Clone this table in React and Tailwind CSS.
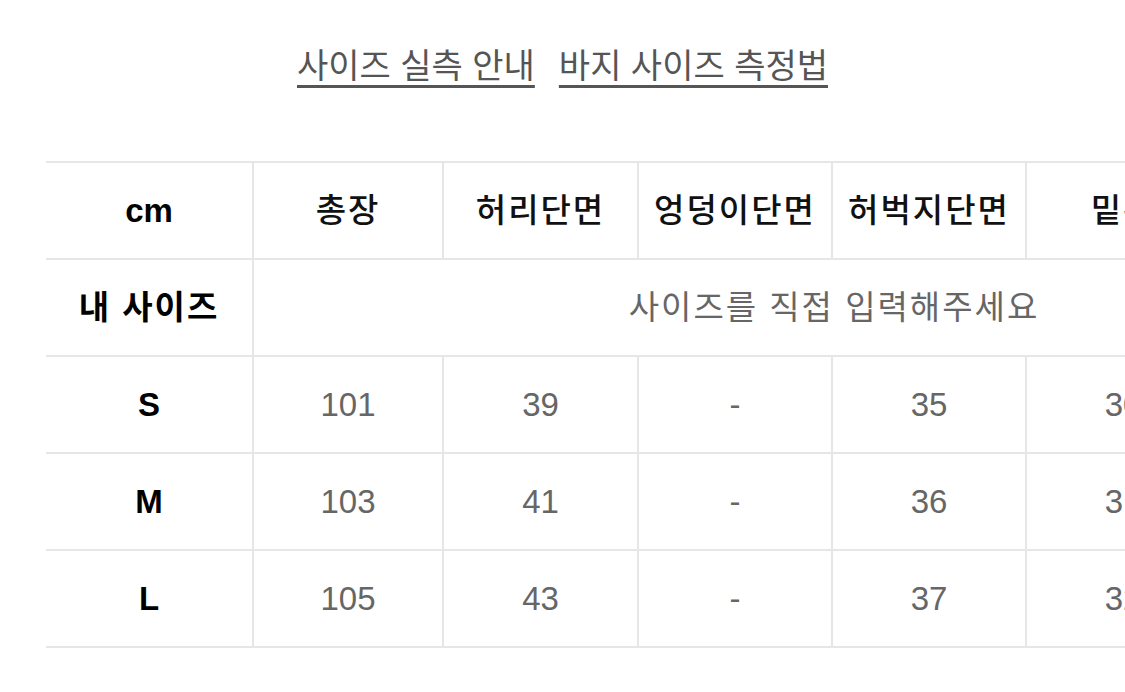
import React from 'react';

const columns = ['총장', '허리단면', '엉덩이단면', '허벅지단면', '밑위', '밑단단면'];
const widths = ['w-[190px]', 'w-[195px]', 'w-[194px]', 'w-[194px]', 'w-[194px]', 'w-[194px]'];

const rows = [
  { size: 'S', values: ['101', '39', '-', '35', '30', '21'] },
  { size: 'M', values: ['103', '41', '-', '36', '31', '22'] },
  { size: 'L', values: ['105', '43', '-', '37', '32', '23'] },
];

const font = { fontFamily: '"Liberation Sans", "Noto Sans CJK KR", sans-serif' };

export default function App() {
  return (
    <div className="w-[1125px] h-[692px] overflow-hidden bg-white" style={font}>
      {/* Links */}
      <div className="flex justify-center gap-[24px] pt-[44px]">
        <a className="text-[34px] leading-[44px] text-[#555] underline decoration-[3px] underline-offset-[7px]">사이즈 실측 안내</a>
        <a className="text-[34px] leading-[44px] text-[#555] underline decoration-[3px] underline-offset-[7px]">바지 사이즈 측정법</a>
      </div>

      {/* Size table */}
      <div className="mt-[73px] ml-[46px]">
        <table className="border-collapse table-fixed w-[1368px]">
          <colgroup>
            <col className="w-[207px]" />
            {widths.map((w, i) => <col key={i} className={w} />)}
          </colgroup>
          <thead>
            <tr className="h-[97px]">
              <th className="border-y-2 border-r-2 border-[#e6e6e6] text-[33px] font-bold text-black">cm</th>
              {columns.map(c => (
                <th key={c} className="border-2 border-[#e6e6e6] text-[33px] font-medium tracking-[2px] text-[#111] whitespace-nowrap">{c}</th>
              ))}
            </tr>
          </thead>
          <tbody>
            <tr className="h-[97px]">
              <td className="border-y-2 border-r-2 border-[#e6e6e6] text-center text-[33px] font-bold tracking-[2px] text-black">내 사이즈</td>
              <td colSpan={6} className="border-y-2 border-[#e6e6e6] text-center text-[33px] tracking-[2px] text-[#666]">사이즈를 직접 입력해주세요</td>
            </tr>
            {rows.map(r => (
              <tr key={r.size} className="h-[97px]">
                <td className="border-y-2 border-r-2 border-[#e6e6e6] text-center text-[33px] font-bold text-black">{r.size}</td>
                {r.values.map((v, i) => (
                  <td key={i} className="border-2 border-[#e6e6e6] text-center text-[33px] text-[#666]">{v}</td>
                ))}
              </tr>
            ))}
          </tbody>
        </table>
      </div>
    </div>
  );
}
